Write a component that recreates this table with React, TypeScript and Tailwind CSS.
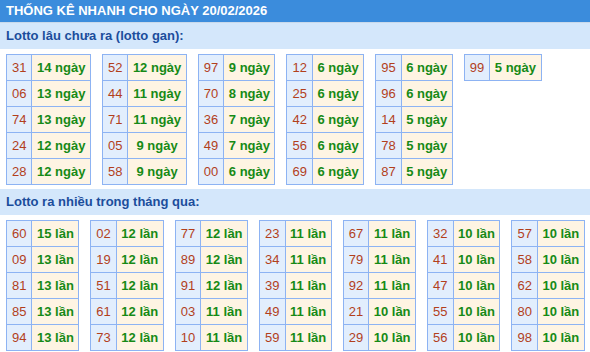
type Row = [string, string]

const ganTables: Row[][] = [
  [['31', '14'], ['06', '13'], ['74', '13'], ['24', '12'], ['28', '12']],
  [['52', '12'], ['44', '11'], ['71', '11'], ['05', '9'], ['58', '9']],
  [['97', '9'], ['70', '8'], ['36', '7'], ['49', '7'], ['00', '6']],
  [['12', '6'], ['25', '6'], ['42', '6'], ['56', '6'], ['69', '6']],
  [['95', '6'], ['96', '6'], ['14', '5'], ['78', '5'], ['87', '5']],
  [['99', '5']],
]

const hotTables: Row[][] = [
  [['60', '15'], ['09', '13'], ['81', '13'], ['85', '13'], ['94', '13']],
  [['02', '12'], ['19', '12'], ['51', '12'], ['61', '12'], ['73', '12']],
  [['77', '12'], ['89', '12'], ['91', '12'], ['03', '11'], ['10', '11']],
  [['23', '11'], ['34', '11'], ['39', '11'], ['49', '11'], ['59', '11']],
  [['67', '11'], ['79', '11'], ['92', '11'], ['21', '10'], ['29', '10']],
  [['32', '10'], ['41', '10'], ['47', '10'], ['55', '10'], ['56', '10']],
  [['57', '10'], ['58', '10'], ['62', '10'], ['80', '10'], ['98', '10']],
]

function LottoTable({ rows, unit }: { rows: Row[]; unit: string }) {
  return (
    <table className="border-collapse self-start shrink-0">
      <tbody>
        {rows.map(([num, count]) => (
          <tr key={num} className="h-[26px]">
            <td className="border border-[#8db3f3] bg-[#e2eefd] p-0 px-[5px] text-center leading-none whitespace-nowrap text-[#b23f1c]">
              {num}
            </td>
            <td className="border border-[#8db3f3] bg-[#fef4e3] p-0 px-[4.5px] text-center leading-none whitespace-nowrap font-bold text-[#168a16]">
              {count} {unit}
            </td>
          </tr>
        ))}
      </tbody>
    </table>
  )
}

function SectionTitle({ children }: { children: string }) {
  return (
    <div className="h-[26px] flex items-center bg-[#d4e7fb] px-[6px] text-[13px] font-bold text-[#1b4d9c]">
      {children}
    </div>
  )
}

export default function App() {
  return (
    <div className="w-[590px] h-[352px] overflow-hidden bg-white font-['Liberation_Sans',Arial,sans-serif] text-[13px]">
      <div className="h-[23px] flex items-center bg-[#3b8cdc] px-[6px] font-bold text-white border-b border-[#c9d9ea]">
        THỐNG KÊ NHANH CHO NGÀY 20/02/2026
      </div>
      <SectionTitle>Lotto lâu chưa ra (lotto gan):</SectionTitle>
      <div className="flex gap-[11px] pl-[6px] pt-[5px] pb-[4px]">
        {ganTables.map((rows, i) => (
          <LottoTable key={i} rows={rows} unit="ngày" />
        ))}
      </div>
      <SectionTitle>Lotto ra nhiều trong tháng qua:</SectionTitle>
      <div className="flex gap-[11px] pl-[6px] pt-[5px]">
        {hotTables.map((rows, i) => (
          <LottoTable key={i} rows={rows} unit="lần" />
        ))}
      </div>
    </div>
  )
}
